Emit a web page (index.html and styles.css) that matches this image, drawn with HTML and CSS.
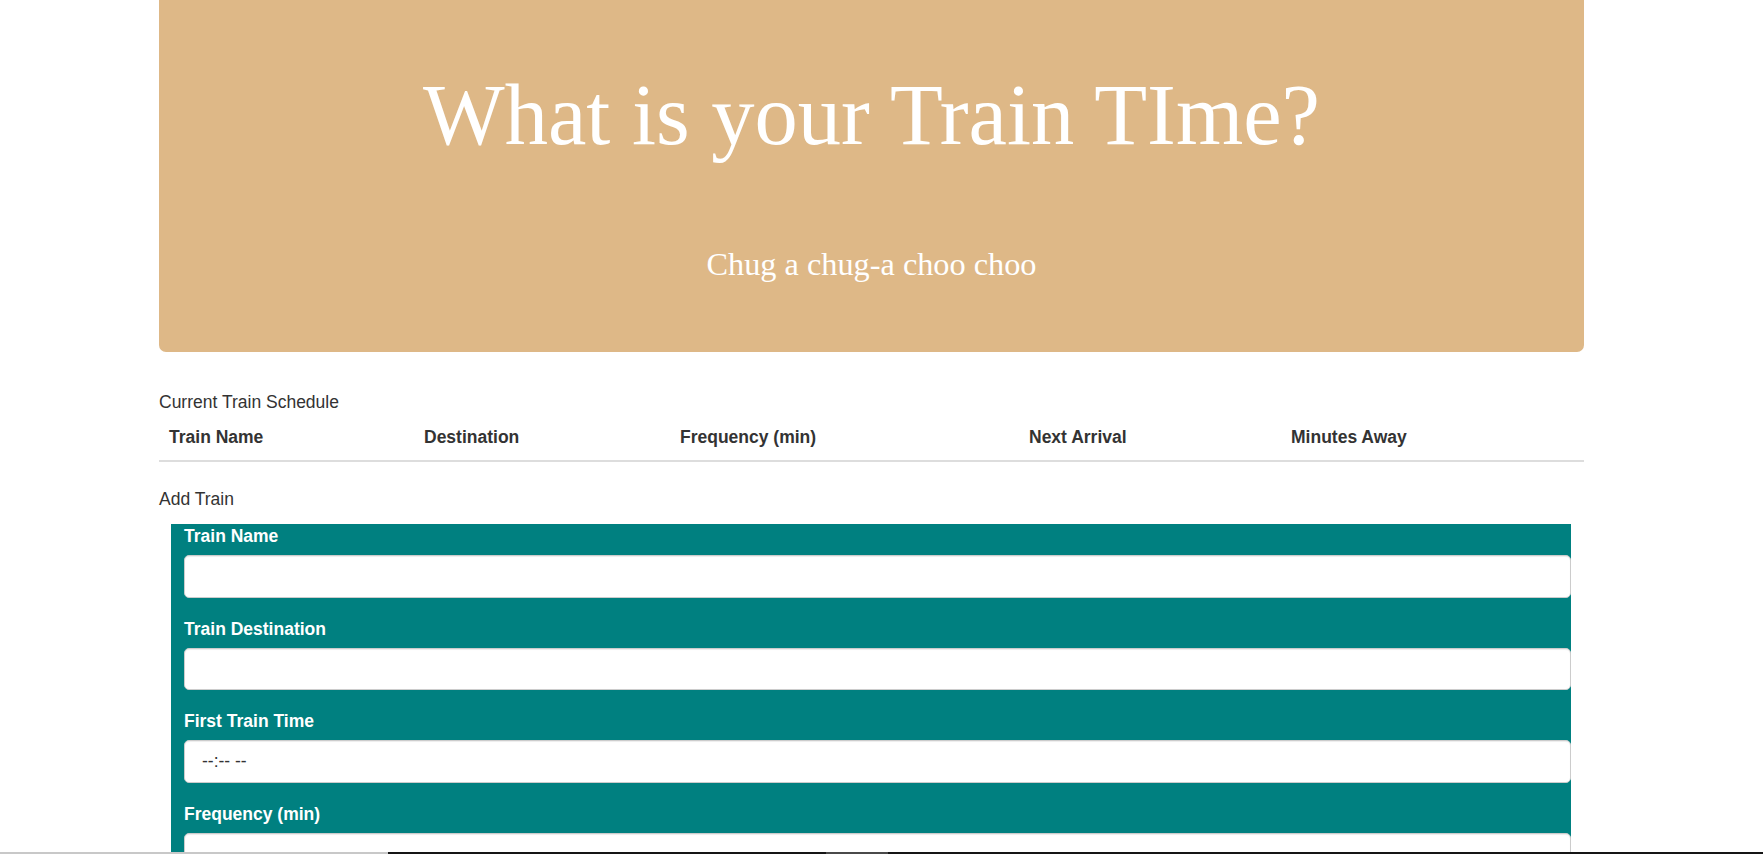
FILE: index.html
```html
<!DOCTYPE html>
<html lang="en">
<head>
<meta charset="utf-8">
<title>Train Time</title>
<link rel="stylesheet" href="styles.css">
</head>
<body>
<div class="container">
  <header class="jumbotron">
    <h1 class="title">What is your Train TIme?</h1>
    <p class="subtitle">Chug a chug-a choo choo</p>
  </header>

  <div class="section-label schedule-label">Current Train Schedule</div>
  <table class="schedule">
    <colgroup>
      <col class="c1"><col class="c2"><col class="c3"><col class="c4"><col class="c5">
    </colgroup>
    <thead>
      <tr>
        <th>Train Name</th>
        <th>Destination</th>
        <th>Frequency (min)</th>
        <th>Next Arrival</th>
        <th>Minutes Away</th>
      </tr>
    </thead>
    <tbody></tbody>
  </table>

  <div class="section-label">Add Train</div>
  <form class="add-form">
    <div class="form-group">
      <label for="name">Train Name</label>
      <input id="name" class="form-control" type="text">
    </div>
    <div class="form-group">
      <label for="dest">Train Destination</label>
      <input id="dest" class="form-control" type="text">
    </div>
    <div class="form-group">
      <label for="first">First Train Time</label>
      <input id="first" class="form-control time" type="text" placeholder="--:-- --">
    </div>
    <div class="form-group">
      <label for="freq">Frequency (min)</label>
      <input id="freq" class="form-control" type="text">
    </div>
  </form>
</div>
<div class="bottom-strip"></div>
</body>
</html>
```

FILE: styles.css
```css
html, body {
  margin: 0;
  padding: 0;
  background: #ffffff;
}

body {
  font-family: "Liberation Sans", Arial, sans-serif;
  font-size: 17.5px;
  line-height: 25px;
  color: #333333;
}

.container {
  width: 1425px;
  margin: 0 0 0 159px;
}

.jumbotron {
  height: 352px;
  box-sizing: border-box;
  padding-top: 72px;
  background: #deb887;
  border-radius: 0 0 7px 7px;
  color: #ffffff;
  text-align: center;
  font-family: "Liberation Serif", "Times New Roman", serif;
}

.title {
  margin: 0;
  font-size: 86.5px;
  line-height: 86px;
  font-weight: normal;
}

.subtitle {
  margin: 90px 0 0;
  font-size: 32.3px;
  line-height: 32px;
}

.section-label {
  margin: 0;
}

.schedule-label {
  margin-top: 38px;
}

.schedule {
  width: 1425px;
  table-layout: fixed;
  border-collapse: collapse;
  border-spacing: 0;
  margin-bottom: 25px;
}

.schedule .c1 { width: 255px; }
.schedule .c2 { width: 256px; }
.schedule .c3 { width: 349px; }
.schedule .c4 { width: 262px; }
.schedule .c5 { width: 303px; }

.schedule th {
  text-align: left;
  font-weight: bold;
  padding: 10px;
  line-height: 25px;
  border-bottom: 2.5px solid #dddddd;
}

.add-form {
  margin: 12px 13px 0 12px;
  padding-left: 13px;
  background: #008080;
  color: #ffffff;
}

.form-group {
  padding-bottom: 19px;
}

.form-group label {
  display: block;
  font-weight: bold;
  margin-bottom: 6px;
}

.form-control {
  display: block;
  box-sizing: border-box;
  width: 100%;
  height: 42.5px;
  margin: 0;
  padding: 0 15px 0 17px;
  font-family: "Liberation Sans", Arial, sans-serif;
  font-size: 17.5px;
  color: #555555;
  background: #ffffff;
  border: 1px solid #cccccc;
  border-radius: 5px;
  box-shadow: inset 0 1px 1px rgba(0, 0, 0, 0.075);
  outline: none;
}

.form-control.time::placeholder {
  color: #333333;
  opacity: 1;
}

.bottom-strip {
  position: fixed;
  left: 0;
  right: 0;
  bottom: 0;
  height: 2px;
  background: linear-gradient(to right, #c8c8c8 0, #c8c8c8 388px, #151515 388px, #151515 826px, #4a4a4a 826px, #4a4a4a 888px, #151515 888px);
}
```
